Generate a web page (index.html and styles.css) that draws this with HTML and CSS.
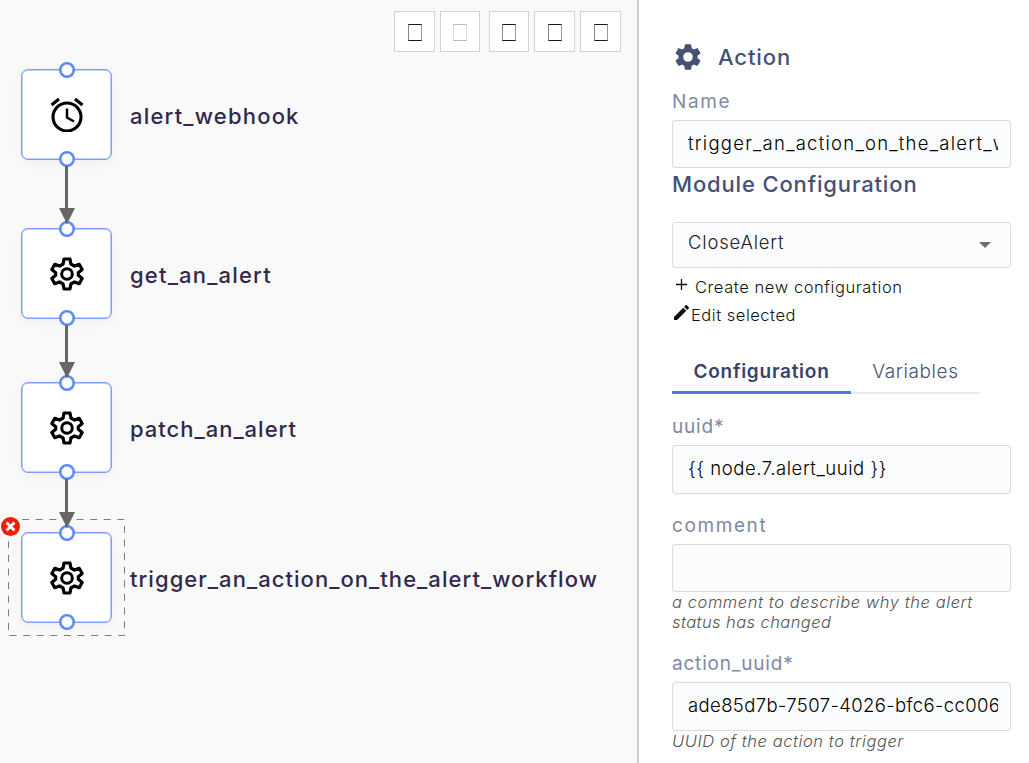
FILE: index.html
```html
<!DOCTYPE html>
<html lang="en">
<head>
<meta charset="utf-8">
<title>Playbook editor</title>
<link rel="stylesheet" href="styles.css">
</head>
<body>
<svg class="defs" width="0" height="0">
  <symbol id="gear" viewBox="0 0 32 34">
    <path d="M13 2h6l.9 5 3.6 2.1 4.7-1.8 3 5.2-3.9 3.200v2.600l3.900 3.200-3 5.200-4.700-1.800-3.600 2.100-.9 5h-6l-.9-5-3.600-2.100-4.700 1.800-3-5.200 3.900-3.200v-2.600l-3.900-3.200 3-5.200 4.700 1.800L12.100 7z" fill="none" stroke="#000" stroke-width="3.200" stroke-linejoin="round"/>
    <circle cx="16" cy="17" r="5.300" fill="none" stroke="#000" stroke-width="3"/>
  </symbol>
</svg>
<main class="editor">
  <section class="canvas">
    <div class="toolbar">
      <button class="tool"><i></i></button>
      <button class="tool narrow" disabled><i></i></button>
      <button class="tool narrow group"><i></i></button>
      <button class="tool"><i></i></button>
      <button class="tool"><i></i></button>
    </div>

    <div class="selection">
      <svg width="118" height="118"><rect x="0.500" y="0.500" width="116" height="116" fill="none" stroke="#7d7a90" stroke-dasharray="7 6.600"/></svg>
    </div>

    <div class="node n1"><svg class="icon" viewBox="0 0 34 34" fill="none" stroke="#000"><circle cx="17" cy="19" r="14" stroke-width="3.100"/><path d="M17 10.500v9l7 4" stroke-width="2.500"/><path d="M1.500 7 9 1M32.500 7 25 1" stroke-width="3.200"/></svg></div>
    <div class="node n2"><svg class="icon"><use href="#gear"/></svg></div>
    <div class="node n3"><svg class="icon"><use href="#gear"/></svg></div>
    <div class="node n4"><svg class="icon"><use href="#gear"/></svg></div>

    <div class="label l1">alert_webhook</div>
    <div class="label l2">get_an_alert</div>
    <div class="label l3">patch_an_alert</div>
    <div class="label l4">trigger_an_action_on_the_alert_workflow</div>

    <div class="edge e1"></div>
    <div class="edge e2"></div>
    <div class="edge e3"></div>

    <svg class="remove" viewBox="0 0 19 19"><circle cx="9.500" cy="9.500" r="9.500" fill="#f01e00"/><path d="M5.500 5.500l8 8M13.500 5.500l-8 8" stroke="#fff" stroke-width="2.900"/></svg>
  </section>

  <aside class="panel">
    <header class="head">
      <svg class="cog" viewBox="2.200 2 19.600 20"><path fill="#455275" d="M19.140 12.940c.04-.3.060-.61.060-.94 0-.32-.02-.64-.07-.94l2.030-1.580c.18-.14.230-.41.120-.61l-1.920-3.320c-.12-.22-.37-.29-.59-.22l-2.390.960c-.5-.38-1.030-.7-1.620-.94l-.36-2.540c-.04-.24-.24-.41-.48-.41h-3.840c-.24 0-.43.170-.47.410l-.36 2.540c-.59.240-1.130.570-1.620.940l-2.390-.96c-.22-.08-.47 0-.59.220L2.740 8.870c-.12.210-.08.470.120.610l2.030 1.580c-.05.300-.09.630-.09.940s.02.640.070.940l-2.030 1.580c-.18.140-.23.410-.12.610l1.920 3.320c.12.220.370.290.590.220l2.390-.96c.5.380 1.030.700 1.620.940l.36 2.540c.05.240.240.410.480.410h3.840c.24 0 .44-.17.470-.41l.36-2.540c.59-.24 1.130-.56 1.620-.94l2.390.960c.22.080.470 0 .59-.22l1.920-3.320c.12-.22.070-.47-.12-.61zM12 15.600A3.600 3.600 0 1 1 12 8.400a3.600 3.600 0 0 1 0 7.200z"/></svg>
      <h1 class="title">Action</h1>
    </header>
    <label class="field-label name">Name</label>
    <input class="box name-box" value="trigger_an_action_on_the_alert_workflow">
    <h2 class="section">Module Configuration</h2>
    <div class="box select"><span>CloseAlert</span></div>
    <div class="links">
      <a class="link create"><svg viewBox="0 0 14 14"><path d="M7 1v12M1 7h12" stroke="#111" stroke-width="1.400"/></svg><span>Create new configuration</span></a>
      <a class="link edit"><svg viewBox="3 3 18 18"><path fill="#111" d="M3 17.250V21h3.750L17.810 9.940l-3.750-3.750zM20.710 7.040a1 1 0 0 0 0-1.410l-2.340-2.340a1 1 0 0 0-1.410 0l-1.830 1.830 3.750 3.750z"/></svg><span>Edit selected</span></a>
    </div>
    <nav class="tabs">
      <a class="tab active">Configuration</a>
      <a class="tab">Variables</a>
    </nav>
    <label class="field-label">uuid*</label>
    <input class="box tpl" value="{{ node.7.alert_uuid }}">
    <label class="field-label comment">comment</label>
    <input class="box short" value="">
    <p class="help">a comment to describe why the alert<br><span class="tight">status has changed</span></p>
    <label class="field-label">action_uuid*</label>
    <input class="box id" value="ade85d7b-7507-4026-bfc6-cc0065d1">
    <p class="help">UUID of the action to trigger</p>
  </aside>
</main>
</body>
</html>
```
FILE: styles.css
```css
*, *::before, *::after { box-sizing: border-box; }
body { margin: 0; background: #fff; font-family: Inter, "Open Sans", sans-serif; }
.defs { position: absolute; }
.editor { display: flex; height: 763px; overflow: hidden; }

/* workflow canvas */
.canvas { position: relative; flex: 0 0 637px; background: #f9f9f9; }
.toolbar { display: flex; gap: 5px; padding: 11px 16px 0 394px; }
.tool { width: 41px; height: 41px; padding: 0; border: 1px solid #d3d3d3; background: #fff; display: flex; align-items: center; justify-content: center; flex: none; }
.tool.narrow { width: 40px; }
.tool.group { margin-left: 4px; }
.tool i { width: 14px; height: 17px; border: 1px solid #1a1a1a; border-left-color: #888; border-right-color: #999; margin-top: 2px; }
.tool:disabled i { opacity: .3; }

.node { position: absolute; left: 21px; width: 91px; height: 91px; border: 1px solid #7c9ffb; border-radius: 7px; background: #fff; box-shadow: inset 0 0 0 .500px #7c9ffb, 0 3px 12px rgba(0,0,0,.045); display: flex; align-items: center; justify-content: center; }
.node::before, .node::after { content: ""; position: absolute; left: 36.500px; width: 16px; height: 16px; border: 2px solid #5b86fb; border-radius: 50%; background: #fff; box-shadow: inset 0 0 0 .600px #5b86fb; z-index: 3; }
.node::before { top: -8px; }
.node::after { bottom: -8px; }
.n1 { top: 69px; }
.n2 { top: 228px; }
.n3 { top: 382px; }
.n4 { top: 532px; }
.icon { width: 34px; height: 34px; }
.label { position: absolute; left: 130px; font-size: 22px; line-height: 28px; font-weight: 500; color: #30294b; white-space: nowrap; letter-spacing: 1.200px; }
.l1 { top: 102px; }
.l2 { top: 261px; }
.l3 { top: 415px; letter-spacing: 1px; }
.l4 { top: 565px; letter-spacing: 1.050px; }
.edge { position: absolute; left: 65px; width: 3px; background: #666; z-index: 4; }
.edge::after { content: ""; position: absolute; left: -6.500px; bottom: -1px; border: 8px solid transparent; border-top: 16px solid #666; border-bottom: 0; }
.e1 { top: 166px; height: 57px; }
.e2 { top: 325px; height: 52px; }
.e3 { top: 479px; height: 48px; }
.selection { position: absolute; left: 8px; top: 519px; width: 118px; height: 118px; }
.selection svg { display: block; }
.remove { position: absolute; left: 1px; top: 517px; width: 19px; height: 19px; }

/* inspector */
.panel { flex: 1; border-left: 2px solid #ccc; padding: 37px 18px 0 33px; background: #fff; }
.head { display: flex; align-items: center; height: 40px; padding-left: 3px; gap: 17px; }
.cog { width: 26px; height: 28px; }
.title { margin: 0; font-size: 22px; font-weight: 500; color: #455275; letter-spacing: .9px; }
.field-label { display: block; margin: 20px 0 6px; font-size: 19px; line-height: 24px; color: #8089a2; letter-spacing: .8px; }
.name { margin-top: 13px; letter-spacing: 1.600px; }
.comment { letter-spacing: 1.600px; }
.box { display: block; width: 339px; height: 49px; padding: 0 12px 3px 15px; border: 1px solid #d9dbde; border-radius: 3px; background: #fbfcfe; font-family: inherit; font-size: 18.500px; font-weight: 300; color: #000; letter-spacing: .8px; outline: 0; }
.name-box, .short { height: 48px; padding-bottom: 2px; }
.name-box { letter-spacing: 1.250px; }
.tpl { letter-spacing: .550px; }
.id { letter-spacing: .380px; }
.section { margin: 0 0 22px; font-size: 22px; line-height: 32px; font-weight: 500; color: #455275; letter-spacing: .850px; }
.select { display: flex; align-items: center; justify-content: space-between; height: 46px; padding: 0 19px 6px 15px; color: #222; }
.select::after { content: ""; border: 6px solid transparent; border-top-color: #6f6f6f; border-bottom: 0; margin-top: 5px; }
.links { padding-top: 5px; }
.link { display: flex; align-items: center; height: 28px; font-size: 16.500px; font-weight: 300; color: #111; letter-spacing: .580px; }
.link svg { width: 13px; height: 13px; margin: -6px 7px 0 3px; }
.link.edit { letter-spacing: .520px; }
.link.edit svg { width: 15px; height: 15px; margin: -5px 2px 0 2px; }
.tabs { display: flex; width: 308px; height: 46px; margin: 19px 0 21px; box-shadow: inset 0 -2px #e6e9ef; }
.tab { width: 129px; text-align: center; line-height: 48px; font-size: 19px; font-weight: 300; color: #455275; white-space: nowrap; letter-spacing: .600px; }
.tab.active { width: 179px; height: 46px; font-weight: 600; letter-spacing: .750px; color: #36446a; border-bottom: 3px solid #4a7bd8; }
.help { margin: 0; font-size: 16.500px; line-height: 20px; font-style: italic; font-weight: 300; color: #555; white-space: nowrap; letter-spacing: .570px; }
.tight { letter-spacing: .420px; }
```
